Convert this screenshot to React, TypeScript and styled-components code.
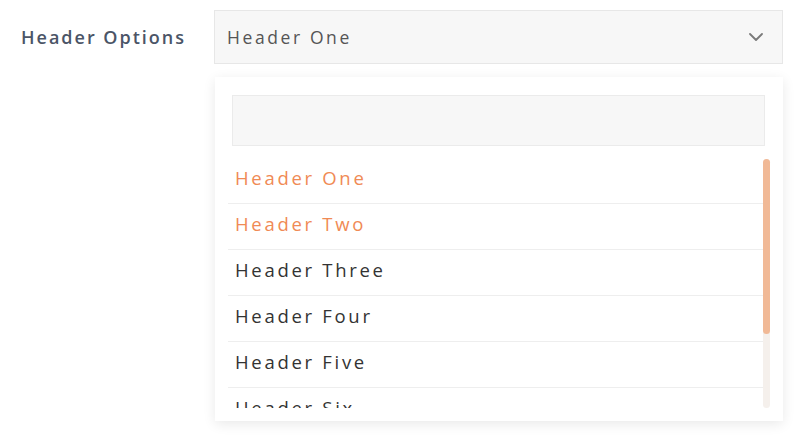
import React from "react";
import styled, { createGlobalStyle } from "styled-components";

const Global = createGlobalStyle`
  html, body { margin: 0; padding: 0; background: #ffffff; }
  body { font-family: "Open Sans", "Liberation Sans", sans-serif; }
  * { box-sizing: border-box; }
`;

const Page = styled.div`
  display: flex;
  align-items: flex-start;
  padding: 10px 18px 0 21px;
  width: 801px;
  height: 439px;
`;

const Label = styled.div`
  width: 193px;
  height: 54px;
  display: flex;
  align-items: center;
  font-size: 18px;
  font-weight: 600;
  color: #4b5567;
  letter-spacing: 2px;
  padding-bottom: 1px;
`;

const Field = styled.div`
  width: 569px;
  display: flex;
  flex-direction: column;
`;

const Select = styled.div`
  height: 54px;
  background: #f7f7f7;
  border: 1px solid #e7e7e7;
  display: flex;
  align-items: center;
  justify-content: space-between;
  padding: 0 19px 0 12px;
  font-size: 17.5px;
  color: #555555;
  letter-spacing: 2.6px;
`;

const Panel = styled.div`
  margin: 13px 0 0 1px;
  height: 344px;
  background: #ffffff;
  box-shadow: 0 3px 12px rgba(0, 0, 0, 0.09);
  padding: 18px 13px 13px 13px;
  display: flex;
  flex-direction: column;
`;

const Search = styled.div`
  margin: 0 5px 0 4px;
  height: 51px;
  background: #f7f7f7;
  border: 1px solid #ebebeb;
`;

const ListArea = styled.div`
  margin-top: 11px;
  height: 251px;
  display: flex;
`;

const List = styled.div`
  flex: 1;
  overflow: hidden;
  padding-top: 1px;
`;

const Item = styled.div<{ $selected?: boolean }>`
  height: 46px;
  border-bottom: 1px solid #eeeeee;
  display: flex;
  align-items: center;
  padding: 0 7px 6px;
  font-size: 18.5px;
  letter-spacing: 2.7px;
  color: ${(p) => (p.$selected ? "#f08a55" : "#333333")};
`;

const Track = styled.div`
  width: 7px;
  margin-top: 2px;
  height: 249px;
  border-radius: 4px;
  background: #f5f0ec;
  display: flex;
  flex-direction: column;
`;

const Thumb = styled.div`
  height: 175px;
  border-radius: 4px;
  background: #f1b996;
`;

const Chevron = () => (
  <svg width="14" height="8" viewBox="0 0 14 8" fill="none">
    <polyline points="1,1 7,7 13,1" stroke="#7a7a7a" strokeWidth="1.8" strokeLinecap="round" strokeLinejoin="round" />
  </svg>
);

const items = [
  { label: "Header One", selected: true },
  { label: "Header Two", selected: true },
  { label: "Header Three" },
  { label: "Header Four" },
  { label: "Header Five" },
  { label: "Header Six" },
];

export default function App() {
  return (
    <>
      <Global />
      <Page>
        <Label>Header Options</Label>
        <Field>
          <Select>
            <span>Header One</span>
            <Chevron />
          </Select>
          <Panel>
            <Search />
            <ListArea>
              <List>
                {items.map((it) => (
                  <Item key={it.label} $selected={it.selected}>
                    {it.label}
                  </Item>
                ))}
              </List>
              <Track>
                <Thumb />
              </Track>
            </ListArea>
          </Panel>
        </Field>
      </Page>
    </>
  );
}
